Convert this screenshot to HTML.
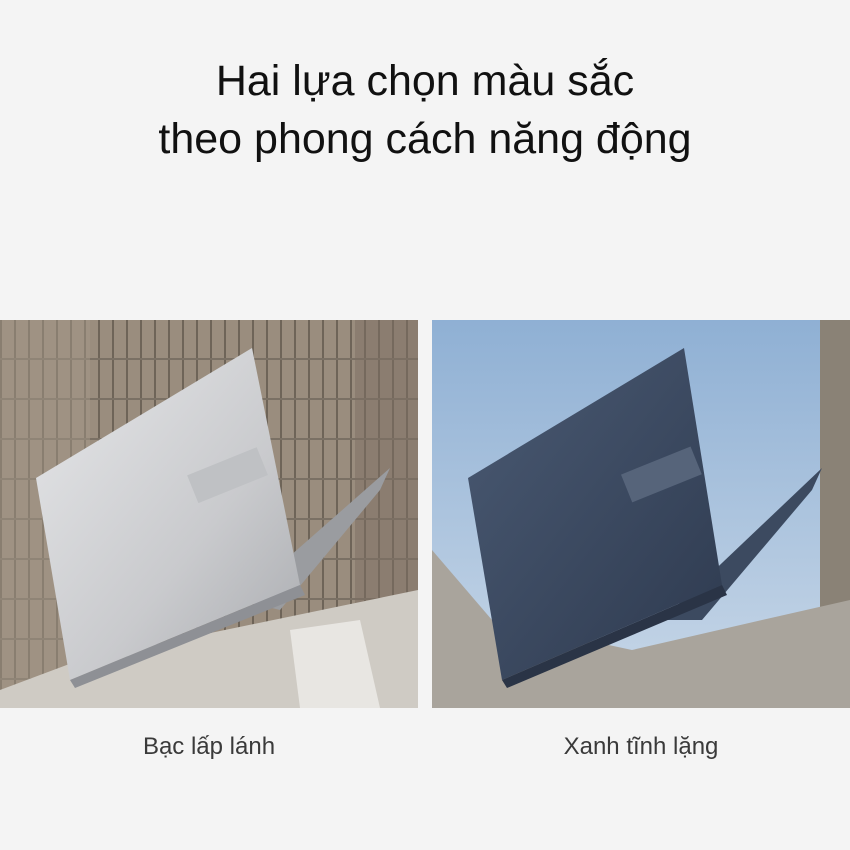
<!DOCTYPE html>
<html><head><meta charset="utf-8"><style>
html,body{margin:0;padding:0;background:#f4f4f4;width:850px;height:850px;overflow:hidden;font-family:"Liberation Sans",sans-serif}
.t{position:absolute;left:0;width:850px;text-align:center;color:#111;font-size:43px;letter-spacing:0px}
.cap{position:absolute;top:733px;font-size:24px;color:#3a3a3a;text-align:center;width:418px}
.img{position:absolute;top:320px;width:418px;height:388px;overflow:hidden}
</style></head><body>
<div class="t" style="top:57px">Hai lựa chọn màu sắc</div>
<div class="t" style="top:115px">theo phong cách năng động</div>

<div class="img" style="left:0">
<svg width="418" height="388" viewBox="0 0 418 388">
<defs>
<pattern id="st" width="14" height="40" patternUnits="userSpaceOnUse"><rect width="14" height="40" fill="#9a8d7e"/><rect x="0" width="2" height="40" fill="#6e6458"/><rect y="38" width="14" height="2" fill="#7a7064"/></pattern>
<linearGradient id="sl" x1="0" y1="0" x2="1" y2="1"><stop offset="0" stop-color="#e6e7e9"/><stop offset="0.6" stop-color="#c9cacd"/><stop offset="1" stop-color="#a9abaf"/></linearGradient>
</defs>
<rect width="418" height="388" fill="url(#st)"/>
<rect x="0" y="0" width="90" height="388" fill="#a49787" opacity="0.5"/>
<rect x="355" y="0" width="63" height="300" fill="#7b6e61" opacity="0.5"/>
<polygon points="0,388 0,370 80,340 418,270 418,388" fill="#cfcbc4"/>
<polygon points="290,310 360,300 380,388 300,388" fill="#e8e6e2"/>
<polygon points="240,280 390,148 380,170 280,290" fill="#9a9ca0"/>
<polygon points="36,158 252,28 300,265 70,360" fill="url(#sl)"/>
<polygon points="70,360 300,265 305,275 75,368" fill="#8e9095"/>
<rect x="190" y="140" width="75" height="30" fill="#bfc1c4" transform="rotate(-22 228 155)"/>
</svg></div>

<div class="img" style="left:432px">
<svg width="418" height="388" viewBox="0 0 418 388">
<defs>
<linearGradient id="sk" x1="0" y1="0" x2="0" y2="1"><stop offset="0" stop-color="#8fb0d4"/><stop offset="1" stop-color="#c9d8e8"/></linearGradient>
<linearGradient id="bl" x1="0" y1="0" x2="1" y2="1"><stop offset="0" stop-color="#4a5a73"/><stop offset="1" stop-color="#2e3a4f"/></linearGradient>
</defs>
<rect width="418" height="388" fill="url(#sk)"/>
<rect x="388" y="0" width="30" height="290" fill="#8a8276"/>
<polygon points="0,388 0,230 60,300 200,330 330,300 418,280 418,388" fill="#a9a49c"/>
<polygon points="230,300 390,148 380,170 270,300" fill="#3c4a60"/>
<polygon points="36,158 252,28 290,265 70,360" fill="url(#bl)"/>
<polygon points="70,360 290,265 295,275 75,368" fill="#2a3446"/>
<rect x="192" y="140" width="75" height="30" fill="#56647a" transform="rotate(-22 228 155)"/>
</svg></div>

<div class="cap" style="left:0">Bạc lấp lánh</div>
<div class="cap" style="left:432px">Xanh tĩnh lặng</div>
</body></html>
